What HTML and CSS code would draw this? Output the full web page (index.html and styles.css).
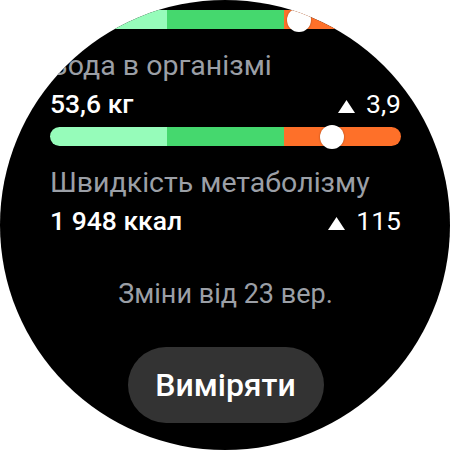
FILE: index.html
```html
<!DOCTYPE html>
<html lang="uk">
<head>
  <meta charset="UTF-8" />
  <title>Склад тіла</title>
  <link rel="stylesheet" href="styles.css">
</head>
<body>
  <div class="watch">
    <div class="content">
      <div class="range-bar">
        <span class="seg low"></span>
        <span class="seg normal"></span>
        <span class="seg high"></span>
        <span class="knob" style="left: 70.9%"></span>
      </div>

      <div class="metric">
        <div class="metric-label">Вода в організмі</div>
        <div class="metric-row">
          <span class="metric-value">53,6 кг</span>
          <span class="metric-delta">
            <svg class="up" width="17" height="13" viewBox="0 0 17 13"><path d="M8.5 0 L17 13 L0 13 Z" fill="#fff"/></svg>
            3,9
          </span>
        </div>
      </div>

      <div class="range-bar">
        <span class="seg low"></span>
        <span class="seg normal"></span>
        <span class="seg high"></span>
        <span class="knob" style="left: 80.3%"></span>
      </div>

      <div class="metric">
        <div class="metric-label">Швидкість метаболізму</div>
        <div class="metric-row">
          <span class="metric-value">1 948 ккал</span>
          <span class="metric-delta">
            <svg class="up" width="17" height="13" viewBox="0 0 17 13"><path d="M8.5 0 L17 13 L0 13 Z" fill="#fff"/></svg>
            115
          </span>
        </div>
      </div>

      <p class="since">Зміни від 23 вер.</p>

      <button class="measure">Виміряти</button>
    </div>
  </div>
</body>
</html>
```

FILE: styles.css
```css
html, body {
  margin: 0;
  padding: 0;
  background: #fff;
  font-family: Roboto, 'Noto Sans', sans-serif;
}

.watch {
  width: 450px;
  height: 450px;
  border-radius: 50%;
  overflow: hidden;
  background: #000;
  color: #fff;
}

.content {
  display: flex;
  flex-direction: column;
  padding: 10px 49px 0 50px;
}

.range-bar {
  position: relative;
  display: flex;
  height: 19px;
}

.seg {
  flex: 1;
}

.seg.low {
  background: #96fcba;
  border-radius: 10px 0 0 10px;
}

.seg.normal {
  background: #45d86e;
}

.seg.high {
  background: #fe7029;
  border-radius: 0 10px 10px 0;
}

.knob {
  position: absolute;
  top: 50%;
  width: 24px;
  height: 24px;
  margin: -12px 0 0 -12px;
  border-radius: 50%;
  background: #fff;
  box-shadow: 0 0 2px rgba(0, 0, 0, 0.4);
}

.metric-label {
  margin-top: 19px;
  font-size: 28.5px;
  line-height: 36px;
  color: #9b9fa6;
}

.metric-row {
  display: flex;
  justify-content: space-between;
  align-items: baseline;
  margin: 5px 0 8px;
  font-size: 26.5px;
  line-height: 30px;
  font-weight: 500;
}

.metric-delta {
  display: flex;
  align-items: baseline;
  gap: 11px;
  font-weight: 400;
}

.metric-delta .up {
  margin-bottom: 1px;
}

.since {
  margin: 34px 0 0;
  font-size: 27px;
  line-height: 32px;
  text-align: center;
  color: #9b9fa6;
}

.measure {
  align-self: center;
  margin: 37px 0 0;
  width: 196px;
  height: 76px;
  border: none;
  border-radius: 38px;
  background: #333;
  color: #fff;
  font-family: inherit;
  font-size: 32px;
  font-weight: 500;
}
```
